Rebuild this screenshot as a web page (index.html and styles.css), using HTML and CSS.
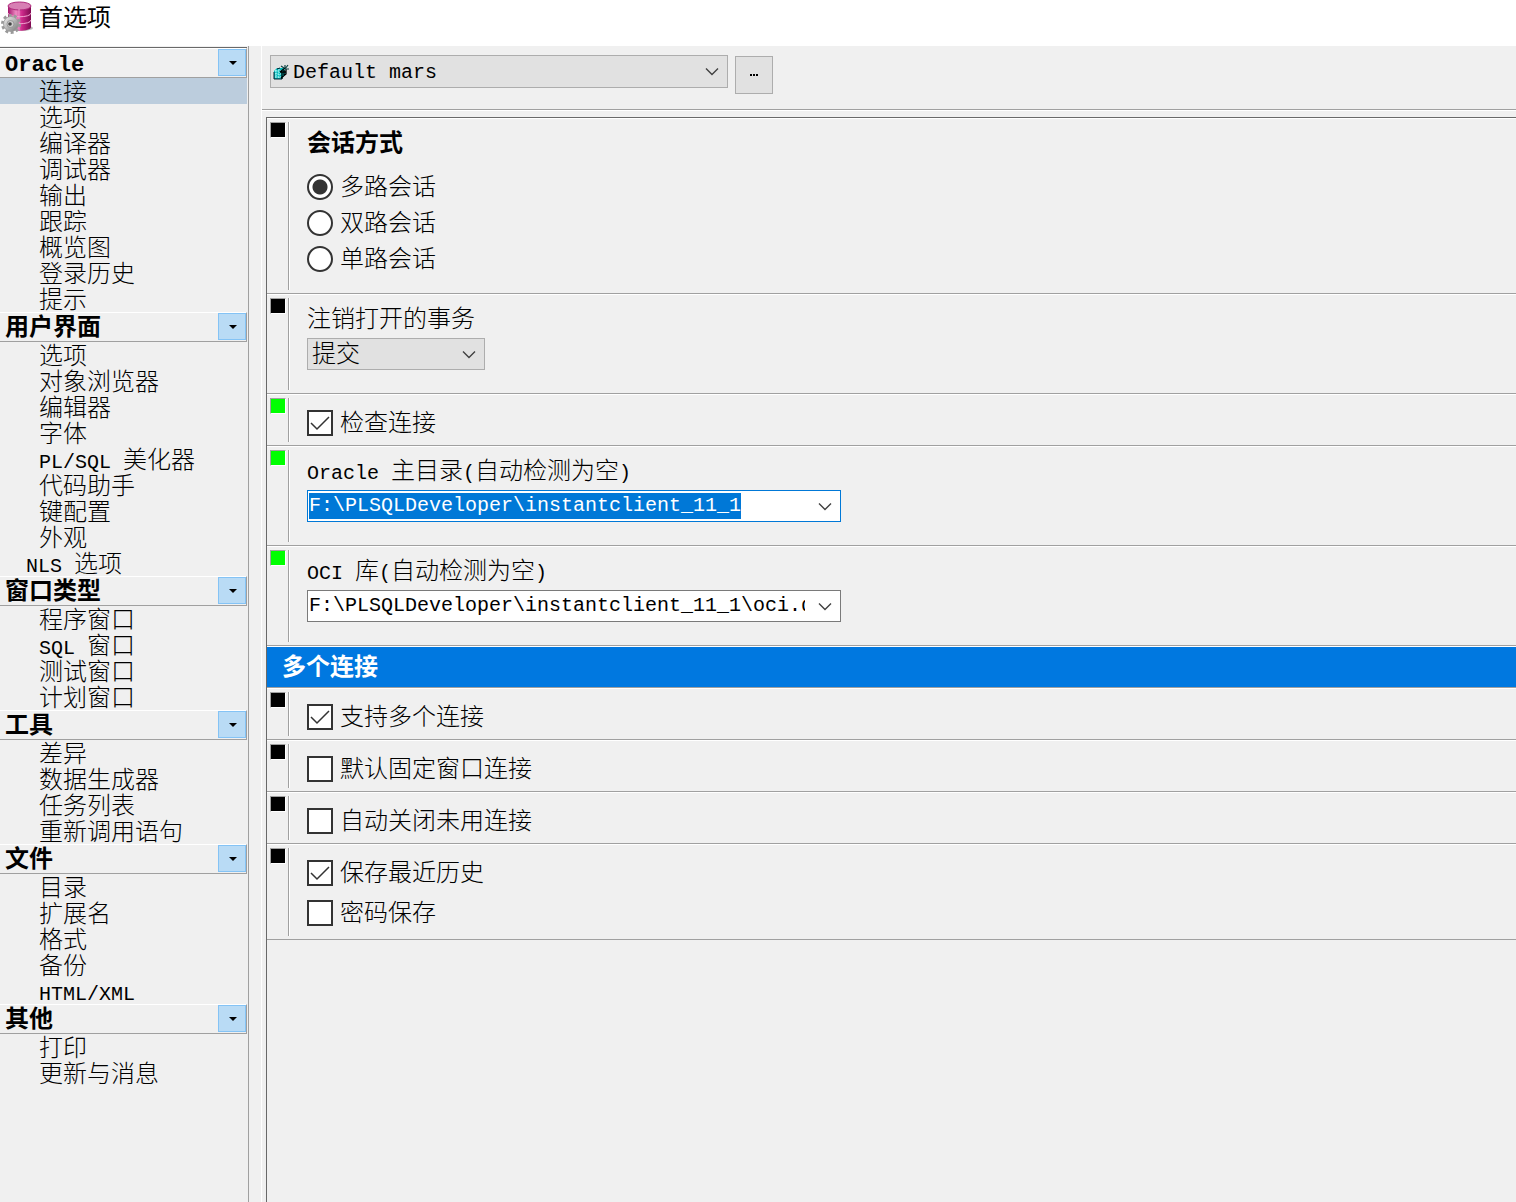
FILE: index.html
```html
<!DOCTYPE html>
<html lang="zh-CN">
<head>
<meta charset="utf-8">
<meta name="viewport" content="width=device-width, initial-scale=1">
<title>首选项</title>
<link rel="stylesheet" href="styles.css">
</head>
<body>
<svg class="defs" aria-hidden="true">
  <symbol id="chevron" viewBox="0 0 14 9"><path d="M1 1.5 7 7.5 13 1.5" fill="none" stroke="#404040" stroke-width="1.4"/></symbol>
  <symbol id="triangle" viewBox="0 0 8 4"><path d="M0 0H8L4 4Z"/></symbol>
</svg>

<header class="titlebar">
  <svg class="app-icon" viewBox="0 0 34 34" aria-hidden="true">
    <defs>
      <linearGradient id="drum" x1="0" x2="1">
        <stop offset="0" stop-color="#a3126b"/><stop offset=".35" stop-color="#ee8cc3"/><stop offset=".6" stop-color="#cf2a8c"/><stop offset="1" stop-color="#7d0a50"/>
      </linearGradient>
      <linearGradient id="steel" x1="0" y1="0" x2="1" y2="1">
        <stop offset="0" stop-color="#f2f2f2"/><stop offset="1" stop-color="#777"/>
      </linearGradient>
    </defs>
    <ellipse cx="22" cy="27" rx="11" ry="3" fill="#bbb"/>
    <path d="M8 5V26C8 31 31 31 31 26V5Z" fill="url(#drum)"/>
    <ellipse cx="19.500" cy="5" rx="11.500" ry="4" fill="#d77fb4" stroke="#b02b7d"/>
    <path d="M8 12C8 17 31 17 31 12M8 19C8 24 31 24 31 19" fill="none" stroke="#f3a6d2"/>
    <path d="M19 8V29" stroke="#f7b5db" stroke-width=".7"/>
    <circle cx="11" cy="23" r="8.500" fill="none" stroke="#999" stroke-width="3" stroke-dasharray="2.900 2.440"/>
    <circle cx="11" cy="23" r="7.500" fill="url(#steel)" stroke="#999" stroke-width=".8"/>
    <circle cx="10.500" cy="23" r="3.500" fill="#ccc" stroke="#888" stroke-width=".7"/>
    <circle cx="10" cy="23" r="1.800" fill="#444"/>
  </svg>
  <h1>首选项</h1>
</header>

<div class="window">
  <nav class="sidebar" aria-label="首选项分类">
    <section>
      <div class="group-head"><h2><span class="latin">Oracle</span></h2><button type="button" aria-label="折叠 Oracle"><svg><use href="#triangle"/></svg></button></div>
      <ul>
        <li><a href="#connection" class="selected" aria-current="page">连接</a></li>
        <li><a href="#options">选项</a></li>
        <li><a href="#compiler">编译器</a></li>
        <li><a href="#debugger">调试器</a></li>
        <li><a href="#output">输出</a></li>
        <li><a href="#trace">跟踪</a></li>
        <li><a href="#profiler">概览图</a></li>
        <li><a href="#logon-history">登录历史</a></li>
        <li><a href="#hints">提示</a></li>
      </ul>
    </section>
    <section>
      <div class="group-head"><h2>用户界面</h2><button type="button" aria-label="折叠 用户界面"><svg><use href="#triangle"/></svg></button></div>
      <ul>
        <li><a href="#ui-options">选项</a></li>
        <li><a href="#browser">对象浏览器</a></li>
        <li><a href="#editor">编辑器</a></li>
        <li><a href="#fonts">字体</a></li>
        <li><a href="#beautifier"><span class="latin">PL/SQL </span>美化器</a></li>
        <li><a href="#assistant">代码助手</a></li>
        <li><a href="#keys">键配置</a></li>
        <li><a href="#appearance">外观</a></li>
        <li><a href="#nls" class="outdent"><span class="latin">NLS </span>选项</a></li>
      </ul>
    </section>
    <section>
      <div class="group-head"><h2>窗口类型</h2><button type="button" aria-label="折叠 窗口类型"><svg><use href="#triangle"/></svg></button></div>
      <ul>
        <li><a href="#program">程序窗口</a></li>
        <li><a href="#sql"><span class="latin">SQL </span>窗口</a></li>
        <li><a href="#test">测试窗口</a></li>
        <li><a href="#plan">计划窗口</a></li>
      </ul>
    </section>
    <section>
      <div class="group-head"><h2>工具</h2><button type="button" aria-label="折叠 工具"><svg><use href="#triangle"/></svg></button></div>
      <ul>
        <li><a href="#diff">差异</a></li>
        <li><a href="#generator">数据生成器</a></li>
        <li><a href="#tasks">任务列表</a></li>
        <li><a href="#recall">重新调用语句</a></li>
      </ul>
    </section>
    <section>
      <div class="group-head"><h2>文件</h2><button type="button" aria-label="折叠 文件"><svg><use href="#triangle"/></svg></button></div>
      <ul>
        <li><a href="#directories">目录</a></li>
        <li><a href="#extensions">扩展名</a></li>
        <li><a href="#format">格式</a></li>
        <li><a href="#backup">备份</a></li>
        <li><a href="#html"><span class="latin">HTML/XML</span></a></li>
      </ul>
    </section>
    <section>
      <div class="group-head"><h2>其他</h2><button type="button" aria-label="折叠 其他"><svg><use href="#triangle"/></svg></button></div>
      <ul>
        <li><a href="#print">打印</a></li>
        <li><a href="#updates">更新与消息</a></li>
      </ul>
    </section>
  </nav>

  <main class="content">
    <div class="toolbar">
      <div class="dropdown profile">
        <svg class="cube" viewBox="0 0 16 16" aria-hidden="true">
          <path d="M1 7 4 4H11L13 9 9 15H1Z" fill="#00b8b8"/>
          <path d="M1 8V15H9M4 5 7 4" fill="none" stroke="#023" stroke-width="1"/>
          <path d="M2 7H8M2 10H8M2 13H8M3 6V14M6 5V14" stroke="#c8ffff" stroke-dasharray="1.500 1"/>
          <path d="M7 8 12 4M8 14 13 10V5M9 8V15M11 6V12M7 8H13" fill="none" stroke="#000" stroke-width="1.300"/>
          <path d="M8 2 11 4M12 1V4M15 1 12 5M13 5H16" stroke="#144" stroke-width="1.200"/>
        </svg>
        <select aria-label="首选项集"><option>Default mars</option></select>
        <svg class="chevron"><use href="#chevron"/></svg>
      </div>
      <button type="button" class="more" aria-label="更多"><i></i><i></i><i></i></button>
    </div>

    <form class="settings">
      <div class="row session">
        <span class="marker"></span>
        <div class="fields">
          <h3 id="session-title">会话方式</h3>
          <div class="radios" role="radiogroup" aria-labelledby="session-title">
            <label class="choice"><input type="radio" name="session" checked>多路会话</label>
            <label class="choice"><input type="radio" name="session">双路会话</label>
            <label class="choice"><input type="radio" name="session">单路会话</label>
          </div>
        </div>
      </div>

      <div class="row tall">
        <span class="marker"></span>
        <div class="fields">
          <label class="caption" for="logoff">注销打开的事务</label>
          <div class="dropdown short">
            <select id="logoff"><option>提交</option></select>
            <svg class="chevron"><use href="#chevron"/></svg>
          </div>
        </div>
      </div>

      <div class="row">
        <span class="marker green"></span>
        <div class="fields checks"><label class="choice"><input type="checkbox" checked>检查连接</label></div>
      </div>

      <div class="row tall">
        <span class="marker green"></span>
        <div class="fields">
          <label class="caption" for="home"><span class="latin">Oracle </span>主目录<span class="latin">(</span>自动检测为空<span class="latin">)</span></label>
          <div class="combo">
            <input type="text" id="home" value="F:\PLSQLDeveloper\instantclient_11_1" spellcheck="false">
            <button type="button" aria-label="选择主目录"><svg class="chevron"><use href="#chevron"/></svg></button>
          </div>
        </div>
      </div>

      <div class="row tall">
        <span class="marker green"></span>
        <div class="fields">
          <label class="caption" for="oci"><span class="latin">OCI </span>库<span class="latin">(</span>自动检测为空<span class="latin">)</span></label>
          <div class="combo">
            <input type="text" id="oci" value="F:\PLSQLDeveloper\instantclient_11_1\oci.dll" spellcheck="false">
            <button type="button" aria-label="选择 OCI 库"><svg class="chevron"><use href="#chevron"/></svg></button>
          </div>
        </div>
      </div>

      <h2 class="banner">多个连接</h2>

      <div class="row">
        <span class="marker"></span>
        <div class="fields checks"><label class="choice"><input type="checkbox" checked>支持多个连接</label></div>
      </div>
      <div class="row">
        <span class="marker"></span>
        <div class="fields checks"><label class="choice"><input type="checkbox">默认固定窗口连接</label></div>
      </div>
      <div class="row">
        <span class="marker"></span>
        <div class="fields checks"><label class="choice"><input type="checkbox">自动关闭未用连接</label></div>
      </div>
      <div class="row history">
        <span class="marker"></span>
        <div class="fields checks">
          <label class="choice"><input type="checkbox" checked>保存最近历史</label>
          <label class="choice"><input type="checkbox">密码保存</label>
        </div>
      </div>
    </form>
  </main>
</div>
<script src="main.js"></script>
</body>
</html>
```
FILE: main.js
```js
// The home directory is ready to be typed over when the page opens.
const home = document.getElementById('home');
home.focus();
home.select();
```
FILE: styles.css
```css
*, ::before { box-sizing: border-box; }

body {
  margin: 0;
  min-height: 100vh;
  display: flex;
  flex-direction: column;
  background: #f0f0f0;
  color: #000;
  font: 300 24px/28px "Liberation Sans", "Noto Sans CJK SC", sans-serif;
}

h1, h2, h3, ul { margin: 0; padding: 0; }
ul { list-style: none; }
a { color: inherit; text-decoration: none; }
input, select, button { font: inherit; color: inherit; margin: 0; }

.defs { display: none; }
.latin { font-family: "Liberation Mono", monospace; font-size: 20px; line-height: 1; white-space: pre; }

.titlebar {
  display: flex;
  align-items: center;
  gap: 5px;
  height: 46px;
  padding-bottom: 10px;
  background: #fff;
}
.titlebar h1 { font-size: 24px; font-weight: 400; }
.app-icon { width: 34px; height: 34px; }

.window { flex: 1; display: flex; }

/* category list */
.sidebar {
  width: 249px;
  flex: none;
  padding: 1px 1px 0 0;
  border-right: 1px solid #a0a0a0;
}
.sidebar section:first-child { border-top: 1px solid #696969; }
.group-head {
  display: flex;
  justify-content: space-between;
  height: 30px;
  padding-left: 5px;
  border-top: 1px solid #fff;
  border-right: 1px solid #a0a0a0;
  border-bottom: 1px solid #a0a0a0;
}
.group-head h2 { font-size: 24px; line-height: 28px; font-weight: 700; }
.group-head .latin { font-size: 22px; }
.group-head button {
  display: grid;
  place-items: center;
  width: 28px;
  height: 27px;
  padding: 0 0 0 2px;
  border: 1px solid #84c3f5;
  background: #b9dbf5;
}
.group-head svg { width: 8px; height: 4px; }
.sidebar a { display: block; height: 26px; padding-left: 39px; white-space: nowrap; }
.sidebar a.outdent { padding-left: 26px; }
.sidebar a.selected { background: #bccddd; }

/* settings pane */
.content {
  flex: 1;
  min-width: 0;
  display: flex;
  flex-direction: column;
  margin-left: 12px;
  border-left: 1px solid #fff;
}
.toolbar {
  display: flex;
  gap: 7px;
  height: 64px;
  padding: 9px 8px 0;
  border-bottom: 1px solid #a0a0a0;
  box-shadow: 0 1px #fff;
}
.dropdown {
  display: grid;
  grid-template-columns: auto 1fr auto;
  align-items: center;
  border: 1px solid #adadad;
  background: #e1e1e1;
}
.dropdown select {
  grid-area: 1 / 2 / 2 / 4;
  appearance: none;
  height: 30px;
  padding: 0 32px 0 4px;
  border: 0;
  background: transparent;
  outline: 0;
}
.dropdown .chevron { grid-area: 1 / 3; margin-right: 8px; pointer-events: none; }
.chevron { width: 14px; height: 9px; }
.profile { width: 458px; height: 33px; }
.profile select { padding-top: 2px; font: 20px "Liberation Mono", monospace; }
.cube { width: 16px; height: 16px; margin-left: 2px; }
.short { width: 178px; height: 32px; }
.more {
  display: flex;
  justify-content: center;
  align-items: center;
  gap: 1px;
  width: 38px;
  height: 38px;
  margin-top: 1px;
  padding: 0;
  border: 1px solid #adadad;
  background: #e1e1e1;
}
.more i { width: 2px; height: 2px; background: #000; }

.settings {
  flex: 1;
  margin: 7px 0 0 4px;
  border-top: 1px solid #696969;
  border-left: 1px solid #696969;
}
.row {
  display: flex;
  padding: 3px 0 3px 3px;
  border-top: 1px solid #fff;
  border-bottom: 1px solid #a0a0a0;
}
.row.tall { min-height: 100px; }
.row.session { min-height: 176px; }
.row.history { min-height: 96px; }
.marker {
  flex: none;
  width: 19px;
  border-right: 1px solid #a0a0a0;
  box-shadow: 1px 0 #fff;
}
.marker::before {
  content: "";
  display: block;
  width: 16px;
  height: 16px;
  border: 1px solid #a0a0a0;
  border-right-color: #fff;
  border-bottom-color: #fff;
  background: #000;
}
.marker.green::before { background: #0f0; }
.fields { padding-left: 18px; }
.fields h3 { padding-top: 3px; font-size: 24px; line-height: 36px; font-weight: 700; }
.radios { padding-top: 8px; }
.radios .choice { height: 36px; }
.choice { display: flex; align-items: center; gap: 7px; height: 26px; }
.checks { display: grid; align-content: start; gap: 14px; padding-top: 12px; padding-bottom: 6px; }
.caption { display: block; padding-top: 2px; line-height: 38px; }

.choice input {
  appearance: none;
  width: 26px;
  height: 26px;
  border: 2px solid #333;
  background: #fff;
}
.choice input[type="radio"] { border-radius: 50%; }
.choice input[type="radio"]:checked { background: radial-gradient(circle, #333 7px, #fff 8px); }
.choice input[type="checkbox"]:checked {
  background: url("data:image/svg+xml,%3Csvg xmlns='http://www.w3.org/2000/svg' viewBox='0 0 22 22'%3E%3Cpath d='M2 11l6 6L20 5' fill='none' stroke='%23333' stroke-width='1.5'/%3E%3C/svg%3E") #fff;
}

.combo {
  display: flex;
  width: 534px;
  max-width: 100%;
  height: 32px;
  padding: 2px 1px;
  border: 1px solid #7a7a7a;
  background: #fff;
}
.combo:focus-within { border-color: #0078d7; }
.combo input {
  flex: 1;
  min-width: 0;
  height: 26px;
  padding: 0;
  border: 0;
  outline: 0;
  background: transparent;
  font: 20px/26px "Liberation Mono", monospace;
}
.combo input::selection { background: #0078d7; color: #fff; }
.combo button {
  display: grid;
  place-items: center;
  width: 34px;
  padding: 0 0 0 6px;
  border: 0;
  background: transparent;
}

.banner {
  height: 42px;
  padding-left: 15px;
  border-top: 1px solid #fff;
  border-bottom: 1px solid #a0a0a0;
  background: #0078e0;
  color: #fff;
  font-size: 24px;
  line-height: 40px;
  font-weight: 700;
}
```
